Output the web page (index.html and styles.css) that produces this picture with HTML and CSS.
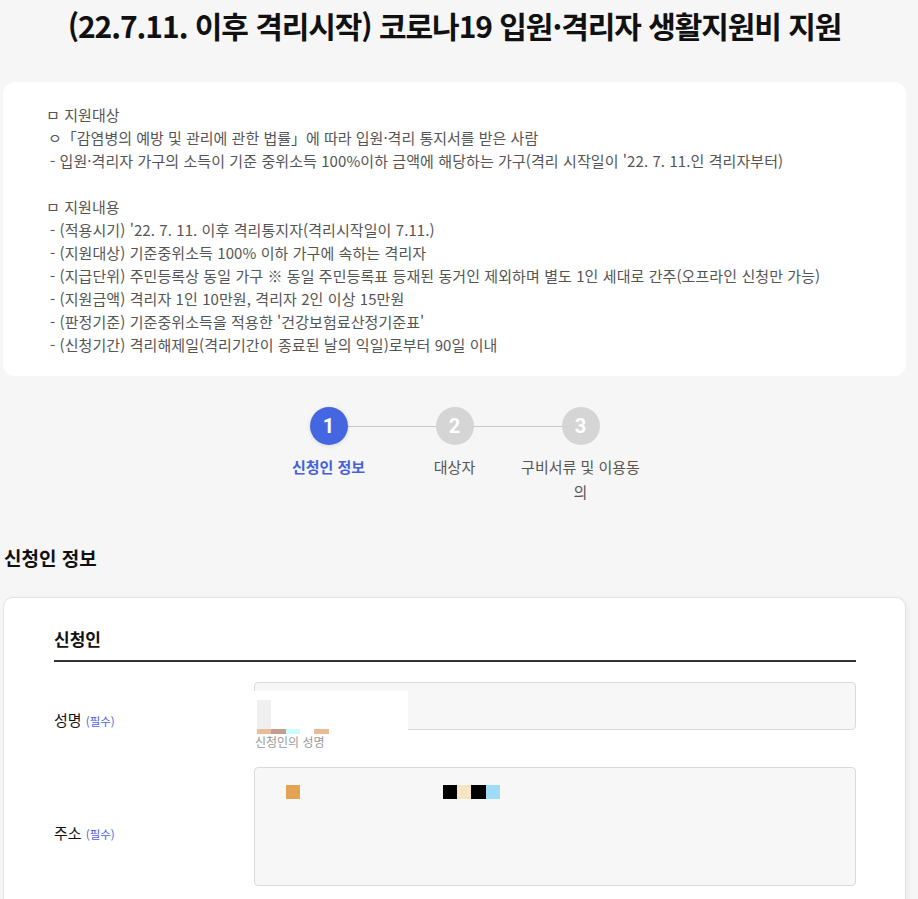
FILE: index.html
```html
<!DOCTYPE html>
<html lang="ko">
<head>
<meta charset="utf-8">
<title>코로나19 입원·격리자 생활지원비 지원</title>
<link rel="stylesheet" href="styles.css">
</head>
<body>
<div class="page">
  <h1 class="title">(22.7.11. 이후 격리시작) 코로나19 입원·격리자 생활지원비 지원</h1>

  <div class="info-card">
    <p>ㅁ 지원대상</p>
    <p class="ind1">ㅇ「감염병의 예방 및 관리에 관한 법률」에 따라 입원·격리 통지서를 받은 사람</p>
    <p class="ind">- 입원·격리자 가구의 소득이 기준 중위소득 100%이하 금액에 해당하는 가구(격리 시작일이 '22. 7. 11.인 격리자부터)</p>
    <p>&nbsp;</p>
    <p>ㅁ 지원내용</p>
    <p class="ind">- (적용시기) '22. 7. 11. 이후 격리통지자(격리시작일이 7.11.)</p>
    <p class="ind">- (지원대상) 기준중위소득 100% 이하 가구에 속하는 격리자</p>
    <p class="ind">- (지급단위) 주민등록상 동일 가구 ※ 동일 주민등록표 등재된 동거인 제외하며 별도 1인 세대로 간주(오프라인 신청만 가능)</p>
    <p class="ind">- (지원금액) 격리자 1인 10만원, 격리자 2인 이상 15만원</p>
    <p class="ind">- (판정기준) 기준중위소득을 적용한 '건강보험료산정기준표'</p>
    <p class="ind">- (신청기간) 격리해제일(격리기간이 종료된 날의 익일)로부터 90일 이내</p>
  </div>

  <ol class="stepper">
    <li class="step active"><span class="dot">1</span><span class="label">신청인 정보</span></li>
    <li class="step"><span class="dot">2</span><span class="label">대상자</span></li>
    <li class="step last"><span class="dot">3</span><span class="label">구비서류 및 이용동의</span></li>
  </ol>

  <h2 class="section-title">신청인 정보</h2>

  <div class="form-card">
    <h3 class="group-title">신청인</h3>

    <div class="row">
      <div class="row-label">성명 <span class="req">(필수)</span></div>
      <div class="field">
        <div class="input"></div>
        <div class="help">신청인의 성명</div>
        <span class="px px-white"></span>
        <span class="px px-gray"></span>
        <span class="px s1"></span><span class="px s2"></span><span class="px s3"></span><span class="px s4"></span><span class="px s5"></span>
      </div>
    </div>

    <div class="row">
      <div class="row-label addr">주소 <span class="req">(필수)</span></div>
      <div class="field">
        <div class="input tall"></div>
        <span class="px a1"></span><span class="px a2"></span><span class="px a3"></span><span class="px a4"></span><span class="px a5"></span>
      </div>
    </div>
  </div>
</div>
</body>
</html>
```

FILE: styles.css
```css
* { box-sizing: border-box; }
html, body { margin: 0; padding: 0; }
body {
  background: #f6f6f6;
  font-family: "Noto Sans CJK KR", "Noto Sans", sans-serif;
  color: #222;
}
.page {
  width: 903px;
  margin-left: 3px;
}
.title {
  margin: 0;
  padding-top: 3px;
  height: 82px;
  text-align: center;
  font-size: 30px;
  line-height: 44px;
  font-weight: 700;
  letter-spacing: -1.05px;
  color: #111;
}
.info-card {
  background: #fff;
  border-radius: 12px;
  padding: 21px 40px 20px 43px;
  color: #555;
  font-size: 15px;
  line-height: 23px;
  letter-spacing: 0.08px;
}
.info-card p { margin: 0; white-space: nowrap; }
.info-card .ind { padding-left: 4px; }
.info-card .ind1 { padding-left: 2px; letter-spacing: 0; }

.stepper {
  list-style: none;
  margin: 31px 0 0;
  padding: 0;
  display: flex;
  justify-content: center;
}
.step {
  width: 126px;
  display: flex;
  flex-direction: column;
  align-items: center;
  position: relative;
}
.step::after {
  content: "";
  position: absolute;
  top: 19px;
  left: 63px;
  width: 126px;
  height: 1px;
  background: #c9c9c9;
  z-index: 0;
}
.step.last::after { display: none; }
.dot {
  position: relative;
  z-index: 1;
  width: 38px;
  height: 38px;
  border-radius: 50%;
  background: #d5d5d5;
  color: #fff;
  font-family: Roboto, "Noto Sans", sans-serif;
  font-weight: 700;
  font-size: 20px;
  display: flex;
  align-items: center;
  justify-content: center;
}
.step.active .dot {
  background: #4466e0;
  box-shadow: 0 1px 4px rgba(0,0,0,0.12);
}
.label {
  margin-top: 9px;
  font-size: 15px;
  line-height: 25px;
  color: #555;
  text-align: center;
  padding: 0 2px;
}
.step.active .label {
  color: #4460de;
  font-weight: 700;
}

.section-title {
  margin: 40px 0 0 1px;
  font-size: 19px;
  line-height: 28px;
  font-weight: 700;
  color: #111;
}
.form-card {
  margin-top: 25px;
  background: #fff;
  border: 1px solid #e2e2e2;
  border-radius: 10px;
  box-shadow: 2px 2px 6px rgba(0,0,0,0.05);
  padding: 27px 49px 40px 50px;
}
.group-title {
  margin: 0;
  font-size: 17px;
  line-height: 28px;
  font-weight: 700;
  color: #111;
  padding-bottom: 7px;
  border-bottom: 2px solid #333;
}
.row {
  display: flex;
  align-items: center;
  margin-top: 20px;
}
.row + .row { margin-top: 16px; }
.row-label {
  width: 200px;
  flex: none;
  font-size: 15px;
  color: #111;
  padding-top: 6px;
}
.row-label.addr { padding-top: 12px; }
.req {
  font-size: 11.5px;
  color: #4a5de0;
}
.field {
  flex: 1;
  position: relative;
}
.input {
  height: 48px;
  background: #f7f7f7;
  border: 1px solid #dadada;
  border-radius: 4px;
}
.input.tall { height: 119px; }
.help {
  margin-top: 3px;
  font-size: 12px;
  line-height: 18px;
  color: #999;
  padding-left: 1px;
}
.px { position: absolute; display: block; }
.px-white { left: 0; top: 9px; width: 154px; height: 39px; background: #fff; }
.px-gray { left: 3px; top: 18px; width: 14px; height: 29px; background: #efefef; }
.s1 { left: 3px; top: 47px; width: 14px; height: 5px; background: #e8bc98; }
.s2 { left: 17px; top: 47px; width: 15px; height: 5px; background: #c39e8c; }
.s3 { left: 32px; top: 47px; width: 14px; height: 5px; background: #ccfdfd; }
.s4 { left: 46px; top: 47px; width: 14px; height: 5px; background: #fff; }
.s5 { left: 60px; top: 47px; width: 15px; height: 5px; background: #e7bb95; }
.a1 { left: 32px; top: 18px; width: 14px; height: 14px; background: #e2a352; }
.a2 { left: 189px; top: 18px; width: 14px; height: 14px; background: #000; }
.a3 { left: 203px; top: 18px; width: 14px; height: 14px; background: #f7e6c4; }
.a4 { left: 217px; top: 18px; width: 15px; height: 14px; background: #000; }
.a5 { left: 232px; top: 18px; width: 14px; height: 14px; background: #a0dcf8; }
```
